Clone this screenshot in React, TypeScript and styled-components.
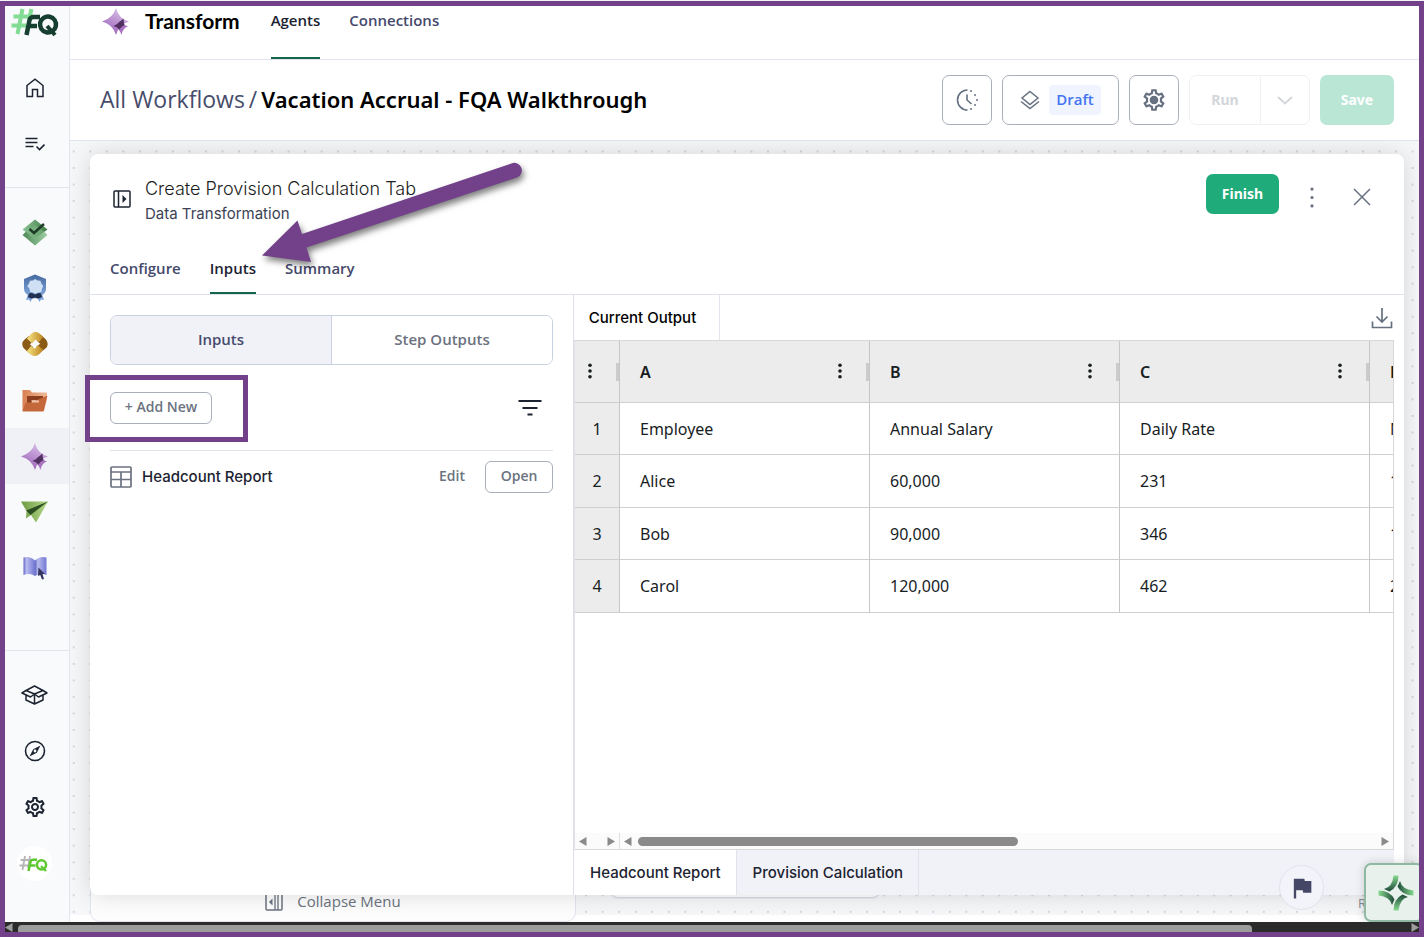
import React from "react";
import styled, { createGlobalStyle, css } from "styled-components";
import { MdOutlineSettings, MdFlag } from "react-icons/md";

const humanist = `"Open Sans", "Noto Sans", sans-serif`;
const grotesk = `Inter, "Liberation Sans", sans-serif`;
const cellFont = `"Noto Sans", "Open Sans", sans-serif`;
const purple = "#734189";
const line = "#e2e4ee";

const GlobalStyle = createGlobalStyle`
  *, *::before, *::after { box-sizing: border-box; }
  body { margin: 0; background: #f3f4f8; font-family: ${humanist}; color: #1c2331; overflow: hidden; }
  button { font: inherit; color: inherit; background: none; border: 0; padding: 0; cursor: pointer; }
  a { color: inherit; text-decoration: none; }
  svg { display: block; flex: none; }
`;

const Frame = styled.div`
  height: calc(100vh - 1px);
  min-height: 700px;
  margin-top: 1px;
  border: 5px solid ${purple};
  display: flex;
  flex-direction: column;
  background: #fff;
  overflow: hidden;
`;

const Shell = styled.div`
  flex: 1;
  min-height: 0;
  display: grid;
  grid-template-columns: 65px minmax(0, 1fr);
`;

/* Sidebar */
const Sidebar = styled.nav`
  display: flex;
  flex-direction: column;
  min-height: 0;
  background: #f9fafc;
  border-right: 1px solid ${line};
`;

const Brand = styled.a`
  height: 54px;
  padding: 2px 0 0 6px;
`;

const NavGroup = styled.div<{ $push?: boolean; $ruled?: boolean }>`
  display: flex;
  flex-direction: column;
  padding: ${(p) => (p.$ruled ? "16px 0 0" : "0 0 15px")};
  ${(p) => p.$ruled && css`border-top: 1px solid ${line};`}
  ${(p) => p.$push && css`margin-top: auto; padding-bottom: 31px;`}
`;

const NavItem = styled.a<{ $active?: boolean }>`
  height: 56px;
  display: grid;
  place-items: center;
  padding-right: 5px;
  background: ${(p) => (p.$active ? "#f0f1f7" : "transparent")};
  color: #1c2331;
`;

const Avatar = styled.span`
  width: 35px;
  height: 35px;
  padding-right: 2px;
  border-radius: 50%;
  background: #fff;
  display: grid;
  place-items: center;
`;

/* Header */
const Main = styled.main`
  display: flex;
  flex-direction: column;
  min-width: 0;
  min-height: 0;
`;

const TopBar = styled.header`
  height: 54px;
  flex: none;
  display: flex;
  align-items: flex-start;
  padding-left: 32px;
  border-bottom: 1px solid ${line};
`;

const Product = styled.div`
  display: flex;
  align-items: center;
  gap: 16px;
  margin-right: 31px;
  font: 700 21px/30px Lato, sans-serif;
  color: #000;
`;

const TabLink = styled.a<{ $active?: boolean; $tall?: boolean }>`
  font-size: 15px;
  font-weight: 600;
  line-height: 20px;
  padding: ${(p) => (p.$tall ? "4px 0 27px" : "0 0 14px")};
  margin-right: 29px;
  color: ${(p) => (p.$active ? "#1c2331" : "#45496b")};
  border-bottom: 2px solid ${(p) => (p.$active ? "#13664a" : "transparent")};
`;

const TitleBar = styled.div`
  height: 81px;
  flex: none;
  display: flex;
  align-items: center;
  gap: 10px;
  padding: 0 25px 0 30px;
  border-bottom: 1px solid #dfe3ee;
`;

const Crumbs = styled.h1`
  flex: 1;
  display: flex;
  gap: 4px;
  margin: 0;
  padding-bottom: 3px;
  font: 400 23px/32px ${humanist};
  color: #474c6b;
  white-space: nowrap;
  strong { font: 600 22px/32px "Noto Sans", sans-serif; color: #000; }
`;

const ToolButton = styled.button<{ $wide?: boolean }>`
  height: 50px;
  width: ${(p) => (p.$wide ? "117px" : "50px")};
  display: flex;
  align-items: center;
  justify-content: center;
  gap: 9px;
  border: 1px solid #a9aebb;
  border-radius: 7px;
  color: #667080;
`;

const DraftTag = styled.span`
  height: 30px;
  padding: 0 7px;
  border-radius: 4px;
  background: #eff4ff;
  color: #4474f0;
  font: 600 15px/29px ${humanist};
`;

const RunGroup = styled.div`
  display: flex;
  height: 50px;
  border: 1px solid #eff0f3;
  border-radius: 7px;
  color: #d3d6da;
`;

const RunButton = styled.button`
  width: 70px;
  font: 700 14px/20px "Noto Sans", sans-serif;
`;

const RunMenu = styled.button`
  width: 49px;
  display: grid;
  place-items: center;
  border-left: 1px solid #eff0f3;
`;

const SolidButton = styled.button<{ $faded?: boolean }>`
  height: ${(p) => (p.$faded ? "50px" : "40px")};
  width: ${(p) => (p.$faded ? "74px" : "73px")};
  border-radius: 7px;
  background: ${(p) => (p.$faded ? "#bae6d6" : "#1fab7a")};
  color: #fff;
  font: 700 14px/20px "Noto Sans", sans-serif;
`;

/* Canvas behind the dialog */
const Canvas = styled.div`
  position: relative;
  flex: 1;
  min-height: 0;
  display: flex;
  padding: 13px 15px 27px 20px;
  overflow: hidden;
`;

const DotField = styled.svg`
  position: absolute;
  inset: 0 0 7px 0;
  width: 100%;
  height: calc(100% - 7px);
  background: #f6f7f9;
`;

const CollapseCard = styled.div`
  position: absolute;
  left: 20px;
  bottom: 0;
  width: 486px;
  height: 80px;
  padding-bottom: 10px;
  display: flex;
  align-items: flex-end;
  justify-content: center;
  gap: 14px;
  background: #fdfdfd;
  border: 1px solid ${line};
  border-radius: 10px;
  color: #6b7280;
  font-size: 15px;
  line-height: 20px;
`;

const BackCard = styled.div`
  position: absolute;
  left: 540px;
  bottom: 25px;
  width: 270px;
  height: 60px;
  background: #fff;
  border-radius: 8px;
  box-shadow: 0 1px 2px #c9cde0;
`;

const Attribution = styled.span`
  position: absolute;
  right: 53px;
  bottom: 10px;
  font-size: 13px;
  line-height: 18px;
  color: #8b8e98;
`;

/* Dialog */
const Dialog = styled.section`
  position: relative;
  flex: 1;
  min-width: 0;
  display: flex;
  flex-direction: column;
  background: #fff;
  border-radius: 8px;
  box-shadow: 0 0 24px rgba(0, 0, 0, 0.14);
`;

const DialogHead = styled.div`
  height: 105px;
  flex: none;
  display: flex;
  align-items: flex-start;
  padding: 20px 32px 0 23px;
`;

const DialogTitles = styled.div`
  flex: 1;
  margin-left: 14px;
  padding-top: 2px;
  font-family: ${grotesk};
  h2 { margin: 0; font-size: 18px; font-weight: 360; line-height: 26px; color: #1b1d22; }
  p { margin: 0; font-size: 15px; line-height: 24px; color: #3c4254; }
`;

const PanelIconSlot = styled.span`
  padding-top: 16px;
`;

const HeadActions = styled.div`
  display: flex;
  gap: 30px;
  margin-left: 23px;
`;

const GhostButton = styled.button`
  width: 20px;
  height: 40px;
  padding-top: 6px;
  display: grid;
  place-items: center;
  color: #667080;
`;

const DialogTabs = styled.div`
  display: flex;
  height: 36px;
  flex: none;
  padding-left: 20px;
  align-items: flex-end;
  border-bottom: 1px solid #dfe3ec;
`;

const Panels = styled.div`
  flex: 1;
  min-height: 0;
  display: grid;
  grid-template-columns: 484px minmax(0, 1fr);
`;

const InputsPanel = styled.div`
  padding: 20px;
  border-right: 1px solid #dcdfea;
`;

const Segmented = styled.div`
  display: flex;
  height: 50px;
  border: 1px solid #c9d0e0;
  border-radius: 7px;
  overflow: hidden;
`;

const Segment = styled.button<{ $on?: boolean }>`
  flex: 1;
  padding-bottom: 2px;
  font-size: 15px;
  font-weight: 600;
  background: ${(p) => (p.$on ? "#f1f2f8" : "#fff")};
  color: ${(p) => (p.$on ? "#474b6d" : "#6b7280")};
  & + & { border-left: 1px solid #c9d0e0; }
`;

const ActionRow = styled.div`
  display: flex;
  align-items: center;
  justify-content: space-between;
  height: 86px;
  padding-right: 11px;
  border-bottom: 1px solid #dfe3ec;
`;

const OutlineButton = styled.button<{ $wide?: boolean }>`
  height: 32px;
  width: ${(p) => (p.$wide ? "102px" : "68px")};
  padding-bottom: 2px;
  border: 1px solid #a9aebb;
  border-radius: 6px;
  background: #fff;
  color: #6b7280;
  font-size: 14px;
  font-weight: 600;
  line-height: 20px;
`;

const Callout = styled.div`
  position: relative;
  &::before {
    content: "";
    position: absolute;
    inset: -17px -36px -18px -25px;
    border: 5px solid ${purple};
    pointer-events: none;
  }
`;

const IconButton = styled.button`
  display: grid;
  place-items: center;
  color: #1c2331;
`;

const SourceRow = styled.div`
  display: flex;
  align-items: center;
  height: 52px;
  color: #6b7280;
`;

const SourceName = styled.span`
  flex: 1;
  margin-left: 10px;
  font: 450 15px/20px ${grotesk};
  color: #1c2331;
`;

const EditButton = styled.button`
  margin-right: 20px;
  padding-bottom: 2px;
  font-size: 14px;
  font-weight: 600;
  line-height: 20px;
`;

/* Output */
const OutputPanel = styled.div`
  display: flex;
  flex-direction: column;
  min-width: 0;
  min-height: 0;
  padding-right: 10px;
`;

const OutputBar = styled.div`
  display: flex;
  justify-content: space-between;
  height: 45px;
  flex: none;
  padding-right: 1px;
`;

const OutputTab = styled.button`
  width: 146px;
  padding-right: 8px;
  border-right: 1px solid ${line};
  font: 450 15px/20px ${grotesk};
  color: #000;
`;

const Grid = styled.div`
  flex: 1;
  min-height: 0;
  display: flex;
  flex-direction: column;
  border: 1px solid #d8d8d8;
  border-left-color: #e2e2e8;
`;

const TableClip = styled.div`
  flex: 1;
  min-height: 0;
  overflow: hidden;
`;

const Table = styled.table`
  table-layout: fixed;
  width: 1045px;
  border-collapse: separate;
  border-spacing: 0;
  font: 400 16px/20px ${cellFont};
  color: #181d1f;
  th, td {
    height: 52px;
    padding: 0 20px;
    border-right: 1px solid #c6c6c6;
    border-bottom: 1px solid #cfcfcf;
    text-align: left;
    white-space: nowrap;
    overflow: hidden;
  }
  tbody tr:nth-child(even) > * { height: 53px; }
  thead th { height: 62px; background: #ececec; font-weight: 600; padding: 0 0 0 20px; }
  tbody th { background: #ececec; font-weight: 400; text-align: center; padding: 0; }
  thead th:first-child { padding-left: 10px; }
`;

const IndexCol = styled.col`
  width: 45px;
`;

const HeadCell = styled.div`
  display: flex;
  align-items: center;
  span { flex: 1; }
`;

const ColMenu = styled.button`
  width: 10px;
  height: 20px;
  padding-bottom: 2px;
  display: grid;
  place-items: center;
  margin-right: 21px;
`;

const Grip = styled.i`
  width: 3px;
  height: 18px;
  background: #cbcbcb;
`;

const ScrollTrack = styled.div`
  display: flex;
  align-items: center;
  height: 16px;
  flex: none;
  background: #fbfbfb;
  color: #8a8a8a;
`;

const RowScroll = styled.div`
  width: 45px;
  height: 16px;
  display: flex;
  align-items: center;
  justify-content: space-between;
  padding: 0 4px;
  border-right: 1px solid #e0e0e0;
`;

const ColScroll = styled.div`
  flex: 1;
  display: flex;
  align-items: center;
  justify-content: space-between;
  gap: 6px;
  padding: 0 4px;
`;

const ThumbLane = styled.div`
  flex: 1;
`;

const Thumb = styled.div`
  width: 51.5%;
  height: 9px;
  border-radius: 5px;
  background: #8a8a8a;
`;

const SheetTabs = styled.div`
  display: flex;
  height: 45px;
  flex: none;
  background: #f1f2f7;
`;

const SheetTab = styled.button<{ $on?: boolean }>`
  padding: 0 15px 0 16px;
  border-right: 1px solid #dfe3ec;
  background: ${(p) => (p.$on ? "#fff" : "transparent")};
  font: 500 15px/20px ${grotesk};
  color: #1c2331;
`;

/* Floating parts */
const FlagButton = styled.button`
  position: absolute;
  z-index: 2;
  right: 95px;
  bottom: 12px;
  width: 45px;
  height: 45px;
  border-radius: 50%;
  border: 1px solid #e0e2ee;
  background: #f3f4f9;
  color: #444766;
  display: grid;
  place-items: center;
`;

const AssistButton = styled.button`
  position: absolute;
  z-index: 2;
  right: -5px;
  bottom: 0;
  width: 60px;
  height: 59px;
  padding-left: 4px;
  border: 2px solid #8fb9a2;
  border-radius: 7px;
  background: #e9f1ed;
  box-shadow: 0 0 10px rgba(20, 40, 30, 0.18);
  display: grid;
  place-items: center;
`;

const ArrowMark = styled.svg`
  position: absolute;
  left: 165px;
  top: 0;
  z-index: 3;
  pointer-events: none;
  filter: drop-shadow(2px 4px 3px rgba(0, 0, 0, 0.5));
`;

const WindowScroll = styled.div`
  height: 10px;
  flex: none;
  display: flex;
  align-items: flex-end;
  gap: 5px;
  background: #2b2b2b;
  color: #9d9d9d;
`;

const WindowThumb = styled.div`
  width: 87.3%;
  height: 7px;
  border-radius: 4px 4px 0 0;
  background: #9d9d9d;
`;

const Spacer = styled.div`
  flex: 1;
`;

/* Drawings */
const Logo = () => (
  <svg width="50" height="30" viewBox="0 0 50 30" fill="none" aria-label="FQ">
    <g stroke="#82dc93" strokeWidth="4">
      <path d="M11.5 1 6.500 26M20.500 1 18 11" />
      <path d="M2.500 8.500H22M0.500 17.500H15" />
    </g>
    <g stroke="#173f30" strokeWidth="4.500">
      <path d="M15.500 27 18.500 12Q19.500 9 22.500 9H29" />
      <path d="M17.500 18H26" />
      <ellipse cx="37" cy="16.500" rx="8" ry="8" transform="rotate(12 37 16.500)" />
      <path d="M36 18 44 27" strokeWidth="4" />
    </g>
  </svg>
);

const MiniLogo = () => (
  <svg width="29" height="17" viewBox="0 0 29 17" fill="none" aria-label="FQ">
    <path d="M6 1 3.500 15M11 1 9 13M1.500 5H12M0.500 10.500H10" stroke="#b5b5b5" strokeWidth="1.800" />
    <path d="M9.500 16 11.500 7Q12 4.800 14 4.800H18M11 10.500H16.500" stroke="#5cc92f" strokeWidth="2.500" />
    <ellipse cx="22.500" cy="9.800" rx="4.600" ry="4.600" stroke="#5cc92f" strokeWidth="2.500" />
    <path d="m22 11 5 5" stroke="#5cc92f" strokeWidth="2.200" />
  </svg>
);

const Home = () => (
  <svg width="18" height="20" viewBox="0 0 18 20" fill="none" stroke="currentColor" strokeWidth="1.500">
    <path d="M1 7.500 9 1.200l8 6.300V18.500H11.500V11.500H6.500V18.500H1Z" />
  </svg>
);

const ListCheck = () => (
  <svg width="20" height="14" viewBox="0 0 20 14" fill="none" stroke="currentColor" strokeWidth="1.600">
    <path d="M0.500 1.500H12.500M0.500 5.500H12.500M0.500 9.500H8.500M11.500 9.500 14.500 12.500 19.500 7.500" />
  </svg>
);

const LayersCheck = () => (
  <svg width="26" height="27" viewBox="0 0 26 27">
    <defs>
      <linearGradient id="lc1" x1="0" x2="1"><stop stopColor="#4d8a55" /><stop offset="1" stopColor="#9fd0a4" /></linearGradient>
      <linearGradient id="lc2" x1="0" x2="1"><stop stopColor="#8cc494" /><stop offset="1" stopColor="#3f7d48" /></linearGradient>
    </defs>
    <path d="M13 .500 25.500 10.500 13 20 .500 10.500Z" fill="url(#lc2)" />
    <path d="M4 12.500 .500 16 13 26.500 25.500 16 22 12.500 13 20Z" fill="url(#lc1)" />
    <path d="M4 12.800 13 6.500 22 12.800 13 20Z" fill="#7fba87" opacity=".55" />
    <path d="M7.500 10 12 14 22 5" fill="none" stroke="#1f3a29" strokeWidth="2.500" />
  </svg>
);

const Shield = () => (
  <svg width="24" height="28" viewBox="0 0 24 28">
    <defs>
      <linearGradient id="sh1" x1="0" y1="0" x2="0" y2="1"><stop stopColor="#46699f" /><stop offset="1" stopColor="#86aee2" /></linearGradient>
    </defs>
    <path d="M5 20 3 26l3-.500L7.500 28 11 21h2l3.500 7 1.500-2.500 3 .500-2-6Z" fill="#7fa3dc" />
    <path d="M12 .500 23 5v10q0 6-11 9.500Q1 21 1 15V5Z" fill="url(#sh1)" />
    <path d="m12 5 2.500 1.500 3 .200.800 2.800 1.900 2.500-1.200 2.800-.500 3-3 .700-2.500 1.500-3-1.500-3-.700-.500-3L4.200 12l1.900-2.500.800-2.800 3-.200Z" fill="#cfdff4" />
    <path d="M6 19.500q3-1.500 6 1 3-2.500 6-1l1 3.500q-3.500 2.500-7 .500-3.500 2-7-.500Z" fill="#22304f" />
  </svg>
);

const Knot = () => (
  <svg width="26" height="24" viewBox="0 0 26 24" fill="none" strokeWidth="7">
    <defs>
      <linearGradient id="kn1" x1="0" x2="1"><stop stopColor="#efd675" /><stop offset="1" stopColor="#c4922f" /></linearGradient>
    </defs>
    <path d="M9.500 6.500 5 10Q2.500 12 5 14.500L9 18" stroke="#8a5a17" />
    <path d="M17 6 21 9.500Q23.500 12 21 14L16.500 17.500" stroke="#8a5a17" />
    <path d="M7.500 9 11 5Q13 2.500 15.500 4.500L19 7.500" stroke="url(#kn1)" />
    <path d="M7 16.500 10.500 19.500Q13 21.500 15.500 19L18.500 15.500" stroke="url(#kn1)" />
  </svg>
);

const Folder = () => (
  <svg width="26" height="23" viewBox="0 0 26 23">
    <defs>
      <linearGradient id="fo1" x1="0" x2="1"><stop stopColor="#d97f52" /><stop offset="1" stopColor="#eebb9a" /></linearGradient>
    </defs>
    <path d="M.500 1H8l2 2.500H25V10L22 22H.500Z" fill="url(#fo1)" />
    <path d="M5 7H21V20H5Z" fill="#8c3f20" />
    <path d="M9.500 11h7v3h-7z" fill="#e6a27e" />
    <path d="M3.500 13.500H11l2-1.500 12.500-5.500L21.500 22.500H.500Z" fill="#c4683c" />
    <path d="M10 12.500h7" stroke="#f0c3a8" strokeWidth="2" />
  </svg>
);

const Spark = () => (
  <svg width="27" height="27" viewBox="0 0 27 27">
    <defs>
      <linearGradient id="sp1" x1=".8" y1="0" x2=".3" y2="1"><stop stopColor="#dcc5ea" /><stop offset="1" stopColor="#9d62b9" /></linearGradient>
    </defs>
    <path d="M14 0q2.500 10.500 13 13.500Q16.500 16.500 14 27 11 16.500 0 13.500 11 10 14 0Z" fill="url(#sp1)" />
    <path d="M19.500 12q1.200 5 6.500 6.500-5.300 1.500-6.500 8.500-1.500-6-7.500-8.500Q18 17 19.500 12Z" fill="#a873c1" />
    <path d="M21.500 10.500q0 4.500 1 6.500-3.500 1.500-5 4.500Q15 18.500 11.500 18q4-1.500 5.500-4 2-1 4.500-3.500Z" fill="#523061" />
  </svg>
);

const Plane = () => (
  <svg width="27" height="22" viewBox="0 0 27 22">
    <defs>
      <linearGradient id="pl1" x1="0" x2="1"><stop stopColor="#6d9a41" /><stop offset="1" stopColor="#b6d98b" /></linearGradient>
    </defs>
    <path d="M0 .500H27L15 21.500 10 14 5 17.500 5.500 10Z" fill="url(#pl1)" />
    <path d="M27 .500 5.200 9.500 9.500 14Z" fill="#2c4f22" />
  </svg>
);

const Book = () => (
  <svg width="24" height="24" viewBox="0 0 24 24">
    <defs>
      <linearGradient id="bk1" x1="0" x2="1"><stop stopColor="#6265c4" /><stop offset=".25" stopColor="#b9bcf0" /><stop offset="1" stopColor="#7377d2" /></linearGradient>
    </defs>
    <path d="M.500 1.500Q7-.500 12 4.500V20Q7 16.500.500 19Z" fill="url(#bk1)" />
    <path d="M23.500 1.500Q17-.500 12 4.500V20q5-3.500 11.500-1Z" fill="url(#bk1)" />
    <path d="M15.500 11.500 22 18h-2.500l1.500 5-2 .500L17.200 19l-2.200 1Z" fill="#34365f" />
  </svg>
);

const Box = () => (
  <svg width="27" height="20" viewBox="0 0 27 20" fill="none" stroke="currentColor" strokeWidth="1.500" strokeLinejoin="round">
    <path d="M5 5.500 13.500 1 22 5.500 13.500 9ZM5 5.500 1 8l8.500 4 4-3 4 3L26 8l-4-2.500M5 10.500V15l8.500 4 8.500-4v-4.500M13.500 9v10" />
  </svg>
);

const Compass = () => (
  <svg width="22" height="22" viewBox="0 0 22 22" fill="none">
    <circle cx="11" cy="11" r="9.500" stroke="currentColor" strokeWidth="1.600" />
    <path fillRule="evenodd" d="M16.500 5.500 12.800 12.800 5.500 16.500 9.200 9.200ZM11 9.600a1.400 1.400 0 1 0 0 2.800 1.400 1.400 0 0 0 0-2.800Z" fill="currentColor" />
  </svg>
);

const History = () => (
  <svg width="22" height="22" viewBox="0 0 22 22" fill="none" stroke="currentColor" strokeWidth="1.600">
    <path d="M11.500 1a10 10 0 0 0 0 20M11 5.500V11l4.500 4" />
    <g fill="currentColor" stroke="none">
      <circle cx="15" cy="2" r="1" /><circle cx="19" cy="6" r="1" /><circle cx="21" cy="11" r="1" />
      <circle cx="19" cy="16" r="1" /><circle cx="15" cy="20" r="1" />
    </g>
  </svg>
);

const Layers = () => (
  <svg width="20" height="20" viewBox="0 0 20 20" fill="none" stroke="currentColor" strokeWidth="1.500">
    <path d="M10 1.500 18 8 10 14.500 2 8ZM1 11.500 10 18.500 19 11.500" />
  </svg>
);

const Gear = () => (
  <svg width="26" height="26" viewBox="0 0 26 26">
    <MdOutlineSettings size={26} />
    <circle cx="13" cy="13" r="3.500" fill="currentColor" />
  </svg>
);

const Chevron = () => (
  <svg width="16" height="9" viewBox="0 0 16 9" fill="none" stroke="currentColor" strokeWidth="1.800"><path d="m1 1 7 6.500L15 1" /></svg>
);

const PanelIcon = ({ flip }: { flip?: boolean }) => (
  <svg width="18" height="18" viewBox="0 0 18 18" fill="none" stroke="currentColor" strokeWidth="1.500">
    <rect x="1" y="1" width="16" height="16" rx="1" />
    {flip ? <path d="M13 1V17M10 1V17" strokeWidth="1.300" /> : <path d="M5.500 1V17" />}
    <path d={flip ? "M7.500 5.500V12.500L4 9Z" : "M9.500 5V13L13.500 9Z"} fill="currentColor" stroke="none" />
  </svg>
);

const Dots = ({ h, r }: { h: number; r: number }) => (
  <svg width="6" height={h} viewBox={`0 0 6 ${h}`} fill="currentColor">
    <circle cx="3" cy={r + 0.5} r={r} /><circle cx="3" cy={h / 2} r={r} /><circle cx="3" cy={h - r - 0.5} r={r} />
  </svg>
);

const Cross = () => (
  <svg width="18" height="18" viewBox="0 0 18 18" stroke="currentColor" strokeWidth="1.500"><path d="M1 1 17 17M17 1 1 17" /></svg>
);

const Filter = () => (
  <svg width="24" height="16" viewBox="0 0 24 16" stroke="currentColor" strokeWidth="2"><path d="M.500 1H23.500M4.500 8H19.500M9.500 14.500H14.500" /></svg>
);

const TableIcon = () => (
  <svg width="22" height="22" viewBox="0 0 22 22" fill="none" stroke="currentColor" strokeWidth="1.700">
    <rect x="1" y="1" width="20" height="20" rx="1" />
    <path d="M1 6H21M1 13.500H21M11 6V21" />
  </svg>
);

const Download = () => (
  <svg width="22" height="22" viewBox="0 0 22 22" fill="none" stroke="#667080" strokeWidth="1.700">
    <path d="M11 1V15M5.500 9.500 11 15 16.500 9.500M1.500 14.500V20.500H20.500V14.500" />
  </svg>
);

const Tri = ({ right }: { right?: boolean }) => (
  <svg width="8" height="9" viewBox="0 0 8 9" fill="currentColor"><path d={right ? "M.500 0 8 4.500.500 9Z" : "M7.500 0 0 4.500 7.500 9Z"} /></svg>
);

const Assist = () => (
  <svg width="36" height="36" viewBox="0 0 36 36">
    <defs>
      <linearGradient id="as1" x1="0" y1="0" x2="0" y2="1"><stop stopColor="#86d98e" /><stop offset="1" stopColor="#1d4a38" /></linearGradient>
    </defs>
    {[0, 90, 180, 270].map((a) => (
      <path key={a} transform={`rotate(${a} 18 18)`} d="M15.500 .500H20.500Q20.500 12 11.500 16.500L6 14Q14.500 12 15.500 .500Z" fill="url(#as1)" />
    ))}
  </svg>
);

const rows = [
  ["Employee", "Annual Salary", "Daily Rate", "Months"],
  ["Alice", "60,000", "231", "12"],
  ["Bob", "90,000", "346", "12"],
  ["Carol", "120,000", "462", "24"],
];

export default function App() {
  return (
    <>
      <GlobalStyle />
      <Frame>
        <Shell>
          <Sidebar>
            <Brand href="#"><Logo /></Brand>
            <NavGroup>
              <NavItem href="#" aria-label="Home"><Home /></NavItem>
              <NavItem href="#" aria-label="Tasks"><ListCheck /></NavItem>
            </NavGroup>
            <NavGroup $ruled>
              <NavItem href="#"><LayersCheck /></NavItem>
              <NavItem href="#"><Shield /></NavItem>
              <NavItem href="#"><Knot /></NavItem>
              <NavItem href="#"><Folder /></NavItem>
              <NavItem href="#" $active><Spark /></NavItem>
              <NavItem href="#"><Plane /></NavItem>
              <NavItem href="#"><Book /></NavItem>
            </NavGroup>
            <NavGroup $ruled $push>
              <NavItem href="#"><Box /></NavItem>
              <NavItem href="#"><Compass /></NavItem>
              <NavItem href="#"><MdOutlineSettings size={24} /></NavItem>
              <NavItem href="#"><Avatar><MiniLogo /></Avatar></NavItem>
            </NavGroup>
          </Sidebar>

          <Main>
            <TopBar>
              <Product><Spark />Transform</Product>
              <TabLink href="#" $active $tall>Agents</TabLink>
              <TabLink href="#" $tall>Connections</TabLink>
            </TopBar>

            <TitleBar>
              <Crumbs><a href="#">All Workflows</a><span>/</span><strong>Vacation Accrual - FQA Walkthrough</strong></Crumbs>
              <ToolButton aria-label="History"><History /></ToolButton>
              <ToolButton $wide><Layers /><DraftTag>Draft</DraftTag></ToolButton>
              <ToolButton aria-label="Settings"><Gear /></ToolButton>
              <RunGroup>
                <RunButton>Run</RunButton>
                <RunMenu aria-label="Run options"><Chevron /></RunMenu>
              </RunGroup>
              <SolidButton $faded>Save</SolidButton>
            </TitleBar>

            <Canvas>
              <DotField>
                <defs>
                  <pattern id="dots" x="2.700" y="9.500" width="16.530" height="16.530" patternUnits="userSpaceOnUse">
                    <circle cx="1" cy="1" r="0.750" fill="#a3a7ae" />
                  </pattern>
                </defs>
                <rect width="100%" height="100%" fill="url(#dots)" />
              </DotField>
              <CollapseCard><PanelIcon flip />Collapse Menu</CollapseCard>
              <BackCard />
              <Attribution>R</Attribution>

              <Dialog>
                <DialogHead>
                  <PanelIconSlot><PanelIcon /></PanelIconSlot>
                  <DialogTitles>
                    <h2>Create Provision Calculation Tab</h2>
                    <p>Data Transformation</p>
                  </DialogTitles>
                  <SolidButton>Finish</SolidButton>
                  <HeadActions>
                    <GhostButton aria-label="More"><Dots h={21} r={1.6} /></GhostButton>
                    <GhostButton aria-label="Close"><Cross /></GhostButton>
                  </HeadActions>
                </DialogHead>

                <DialogTabs>
                  <TabLink href="#">Configure</TabLink>
                  <TabLink href="#" $active>Inputs</TabLink>
                  <TabLink href="#">Summary</TabLink>
                </DialogTabs>

                <Panels>
                  <InputsPanel>
                    <Segmented>
                      <Segment $on>Inputs</Segment>
                      <Segment>Step Outputs</Segment>
                    </Segmented>
                    <ActionRow>
                      <Callout><OutlineButton $wide>+ Add New</OutlineButton></Callout>
                      <IconButton aria-label="Filter"><Filter /></IconButton>
                    </ActionRow>
                    <SourceRow>
                      <TableIcon />
                      <SourceName>Headcount Report</SourceName>
                      <EditButton>Edit</EditButton>
                      <OutlineButton>Open</OutlineButton>
                    </SourceRow>
                  </InputsPanel>

                  <OutputPanel>
                    <OutputBar>
                      <OutputTab>Current Output</OutputTab>
                      <IconButton aria-label="Download"><Download /></IconButton>
                    </OutputBar>
                    <Grid>
                      <TableClip>
                        <Table>
                          <colgroup>
                            <IndexCol />
                            {rows[0].map((c) => <col key={c} />)}
                          </colgroup>
                          <thead>
                            <tr>
                              <th><HeadCell><ColMenu aria-label="Table menu"><Dots h={16} r={1.8} /></ColMenu><Grip /></HeadCell></th>
                              {["A", "B", "C", "D"].map((c) => (
                                <th key={c}><HeadCell><span>{c}</span><ColMenu aria-label={`Column ${c} menu`}><Dots h={16} r={1.8} /></ColMenu><Grip /></HeadCell></th>
                              ))}
                            </tr>
                          </thead>
                          <tbody>
                            {rows.map((r, i) => (
                              <tr key={r[0]}>
                                <th scope="row">{i + 1}</th>
                                {r.map((c, j) => <td key={j}>{c}</td>)}
                              </tr>
                            ))}
                          </tbody>
                        </Table>
                      </TableClip>
                      <ScrollTrack>
                        <RowScroll><Tri /><Tri right /></RowScroll>
                        <ColScroll><Tri /><ThumbLane><Thumb /></ThumbLane><Tri right /></ColScroll>
                      </ScrollTrack>
                    </Grid>
                    <SheetTabs>
                      <SheetTab $on>Headcount Report</SheetTab>
                      <SheetTab>Provision Calculation</SheetTab>
                    </SheetTabs>
                  </OutputPanel>
                </Panels>

                <ArrowMark width="280" height="125" viewBox="0 0 280 125" fill={purple}>
                  <path d="M7 101.500 42.500 66.500 47 80 256.500 9.400a7.600 7.600 0 0 1 5.500 14.200L51.500 93.500 56 108Z" />
                </ArrowMark>
              </Dialog>

              <FlagButton aria-label="Flag"><MdFlag size={28} /></FlagButton>
              <AssistButton aria-label="Assistant"><Assist /></AssistButton>
            </Canvas>
          </Main>
        </Shell>
        <WindowScroll><Tri /><WindowThumb /><Spacer /><Tri right /></WindowScroll>
      </Frame>
    </>
  );
}
